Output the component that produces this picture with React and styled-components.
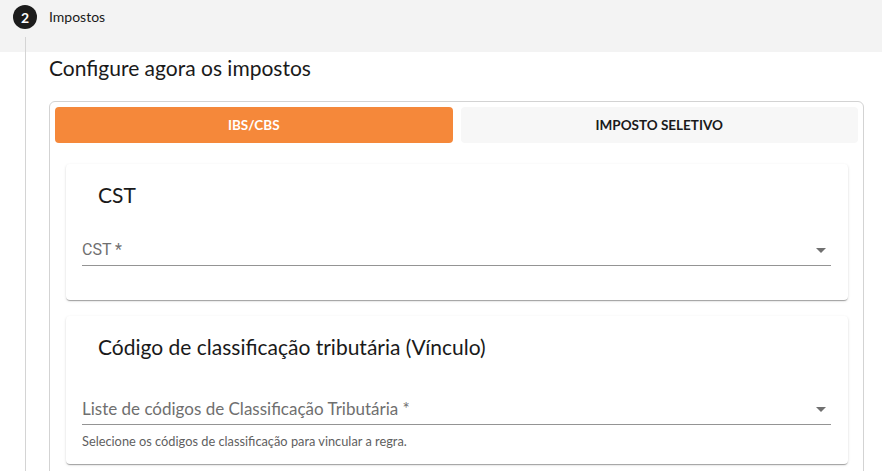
import React from 'react';
import styled, { createGlobalStyle } from 'styled-components';

const GlobalStyle = createGlobalStyle`
  html, body {
    margin: 0;
    padding: 0;
    background: #ffffff;
    font-family: Lato, "Noto Sans", sans-serif;
    color: #1a1a1a;
  }
  * {
    box-sizing: border-box;
  }
`;

const StepHeader = styled.div`
  display: flex;
  align-items: stretch;
  height: 52px;
  padding: 5px 0 0 13px;
  background: #f3f3f3;
`;

const BadgeColumn = styled.div`
  display: flex;
  flex-direction: column;
  align-items: center;
  width: 24px;
`;

const Badge = styled.div`
  display: flex;
  align-items: center;
  justify-content: center;
  width: 24px;
  height: 24px;
  border-radius: 50%;
  background: #1c1c1c;
  color: #ffffff;
  font-size: 14px;
  font-weight: 700;
`;

const Connector = styled.div`
  flex: 1;
  width: 1px;
  margin-top: 8px;
  background: #d4d4d4;
`;

const StepLabel = styled.div`
  margin-left: 12px;
  font-size: 14px;
  line-height: 24px;
  color: #1a1a1a;
`;

const StepBody = styled.div`
  margin-left: 25px;
  padding: 2px 18px 40px 23px;
  border-left: 1px solid #d4d4d4;
`;

const Title = styled.h2`
  margin: 0 0 19px;
  font-size: 21px;
  font-weight: 400;
  line-height: 28px;
  color: #1a1a1a;
`;

const OuterCard = styled.div`
  padding: 5px 5px 20px;
  border: 1px solid #d3d3d3;
  border-radius: 6px;
`;

const Tabs = styled.div`
  display: grid;
  grid-template-columns: 1fr 1fr;
  gap: 8px;
`;

const Tab = styled.button`
  height: 36px;
  border: none;
  border-radius: 4px;
  background: ${({ $active }) => ($active ? '#f5883a' : '#f7f7f7')};
  color: ${({ $active }) => ($active ? '#ffffff' : '#1a1a1a')};
  font-family: Lato, "Noto Sans", sans-serif;
  font-size: 13.5px;
  font-weight: 700;
  cursor: pointer;
`;

const Panel = styled.div`
  display: flex;
  flex-direction: column;
  gap: 16px;
  padding: 21px 10px 0 11px;
`;

const Section = styled.div`
  padding: 17px 17px ${({ $bottom }) => $bottom}px 16px;
  background: #ffffff;
  border-radius: 4px;
  box-shadow: 0 2px 1px -1px rgba(0, 0, 0, 0.2), 0 1px 1px 0 rgba(0, 0, 0, 0.14),
    0 1px 3px 0 rgba(0, 0, 0, 0.12);
`;

const SectionTitle = styled.h3`
  margin: 0;
  padding-left: 16px;
  font-size: 21px;
  font-weight: 400;
  line-height: 28px;
  color: #1a1a1a;
`;

const Field = styled.div`
  display: flex;
  align-items: center;
  justify-content: space-between;
  height: 48px;
  margin-top: ${({ $top }) => $top}px;
  padding: 16px 0 0;
  border-bottom: 1px solid #949494;
`;

const FieldLabel = styled.span`
  font-family: ${({ $roboto }) => ($roboto ? 'Roboto, sans-serif' : 'Lato, "Noto Sans", sans-serif')};
  font-size: ${({ $roboto }) => ($roboto ? 16 : 17)}px;
  color: #6f6f6f;
`;

const Arrow = styled.svg`
  width: 24px;
  height: 24px;
  margin-right: -2px;
  fill: #707070;
`;

const Helper = styled.p`
  margin: 6px 0 0;
  font-size: 12.8px;
  line-height: 20px;
  color: #5f5f5f;
`;

function SelectField({ label, top, roboto }) {
  return (
    <Field $top={top}>
      <FieldLabel $roboto={roboto}>{label}</FieldLabel>
      <Arrow viewBox="0 0 24 24">
        <path d="M7 10l5 5 5-5z" />
      </Arrow>
    </Field>
  );
}

export default function App() {
  return (
    <>
      <GlobalStyle />
      <StepHeader>
        <BadgeColumn>
          <Badge>2</Badge>
          <Connector />
        </BadgeColumn>
        <StepLabel>Impostos</StepLabel>
      </StepHeader>
      <StepBody>
        <Title>Configure agora os impostos</Title>
        <OuterCard>
          <Tabs>
            <Tab $active>IBS/CBS</Tab>
            <Tab>IMPOSTO SELETIVO</Tab>
          </Tabs>
          <Panel>
            <Section $bottom={34}>
              <SectionTitle>CST</SectionTitle>
              <SelectField label="CST *" top={9} roboto />
            </Section>
            <Section $bottom={13}>
              <SectionTitle>Código de classificação tributária (Vínculo)</SectionTitle>
              <SelectField label="Liste de códigos de Classificação Tributária *" top={16} />
              <Helper>Selecione os códigos de classificação para vincular a regra.</Helper>
            </Section>
          </Panel>
        </OuterCard>
      </StepBody>
    </>
  );
}
